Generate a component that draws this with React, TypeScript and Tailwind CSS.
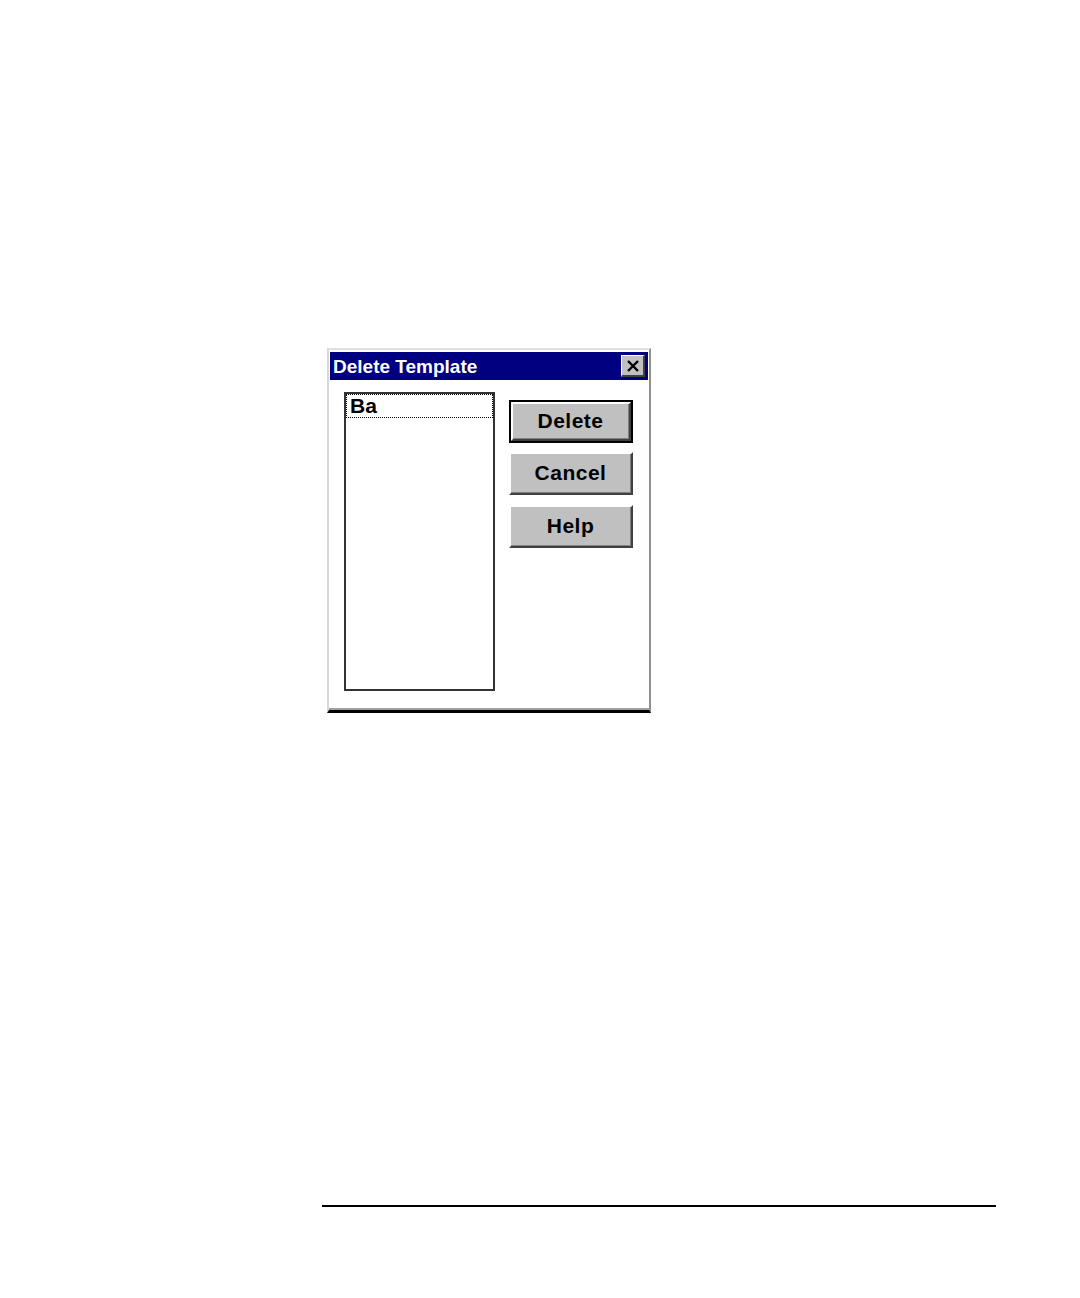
import React from "react";

function Bevel({ label, w, h }: { label: string; w: string; h: string }) {
  return (
    <div className={`${w} ${h} border-t-2 border-l-2 border-t-white border-l-white border-r-2 border-b-2 border-r-[#404040] border-b-[#404040] bg-[#c0c0c0]`}>
      <div className="flex h-full w-full items-center justify-center border-r border-b border-r-[#808080] border-b-[#808080] text-[21px] font-bold tracking-[0.5px] text-black">
        {label}
      </div>
    </div>
  );
}

export default function App() {
  return (
    <div className="relative h-[1298px] w-[1080px] bg-white" style={{ fontFamily: '"Liberation Sans", Arial, sans-serif' }}>
      <div className="pl-[327px] pt-[348px]">
        <div className="h-[365px] w-[324px] border-t-2 border-l-2 border-t-[#e0e0e0] border-l-[#d8d8d8] border-r-2 border-b-[3px] border-r-[#909090] border-b-black bg-white">
          <div className="h-full w-full border-b-2 border-b-[#a0a0a0] px-[1px] pt-[2px]">
            <div className="flex h-[28px] items-center justify-between bg-[#000080] pl-[3px] pr-[3px]">
              <span className="text-[19px] font-bold leading-none text-white">Delete Template</span>
              <div className="flex h-[22px] w-[24px] items-center justify-center border-t border-l border-t-white border-l-white border-r-2 border-b-2 border-r-[#404040] border-b-[#404040] bg-[#c0c0c0]">
                <svg width="14" height="12" viewBox="0 0 14 12">
                  <path d="M2 1 L12 11 M12 1 L2 11" stroke="black" strokeWidth="2.4" />
                </svg>
              </div>
            </div>
            <div className="flex pl-[14px] pt-[12px]">
              <div className="h-[299px] w-[151px] border-2 border-[#333333] bg-white">
                <div className="h-[24px] border border-dotted border-black pl-[3px] text-[21px] font-bold leading-[22px] text-black">
                  Ba
                </div>
              </div>
              <div className="ml-[14px] flex flex-col pt-[8px]">
                <div className="border-2 border-black">
                  <Bevel label="Delete" w="w-[120px]" h="h-[39px]" />
                </div>
                <div className="mt-[9px]">
                  <Bevel label="Cancel" w="w-[124px]" h="h-[43px]" />
                </div>
                <div className="mt-[10px]">
                  <Bevel label="Help" w="w-[124px]" h="h-[43px]" />
                </div>
              </div>
            </div>
          </div>
        </div>
      </div>
      <div className="ml-[322px] mt-[492px] h-[2px] w-[674px] bg-black" />
    </div>
  );
}
